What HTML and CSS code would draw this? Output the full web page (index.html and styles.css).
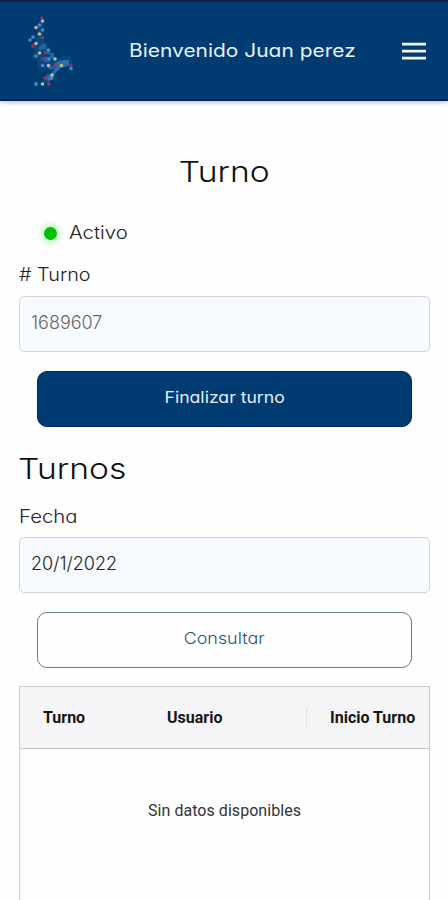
FILE: index.html
```html
<!DOCTYPE html>
<html lang="es">
<head>
<meta charset="utf-8">
<title>Turno</title>
<link rel="stylesheet" href="styles.css">
</head>
<body>
<header class="topbar">
  <svg class="logo" viewBox="0 0 60 80" width="60" height="80" aria-hidden="true">
    <g class="wing">
      <path d="M20 9l3-3 2 5-2 10 1 10 6 7 4 7 4 4 6-3 7 1 2 9-9-2-6 5-4 7-7 7-9 1 10-7 5-6-8-2-7-3-1-6-6-3 5-6-4-4 4-5 1-9z" opacity=".16"/>
      <path d="M35 53l4-2 5-1h5v6l-8 2-6 5-4 7-4 2 3-7 5-6z" opacity=".6"/>
      <g opacity=".45"><rect x="21" y="34" width="5" height="5"/><rect x="26" y="39" width="4" height="5"/><rect x="30" y="43" width="4" height="5"/><rect x="24" y="47" width="5" height="5"/><rect x="28" y="56" width="6" height="3"/><rect x="26" y="64" width="6" height="6"/><rect x="19" y="36" width="4" height="4"/></g>
    </g>
    <g class="blue"><circle cx="19.5" cy="15" r="1.8"/><circle cx="22.5" cy="20" r="1.8"/><circle cx="13" cy="27" r="1.8"/><circle cx="10" cy="30" r="1.8"/><circle cx="16" cy="46" r="1.8"/><circle cx="29" cy="49" r="1.8"/><circle cx="22.5" cy="55.5" r="1.8"/><circle cx="28.5" cy="40" r="1.8"/><circle cx="51" cy="58.5" r="1.8"/><circle cx="16" cy="74" r="1.9"/><circle cx="32" cy="68" r="1.8"/></g>
    <g class="gold"><circle cx="22.5" cy="11" r="1.8"/><circle cx="16" cy="17.5" r="1.8"/><circle cx="19.5" cy="24" r="1.8"/><circle cx="16" cy="33.5" r="1.8"/><circle cx="19.5" cy="43" r="1.8"/><circle cx="35" cy="49" r="1.8"/><circle cx="28.5" cy="55.5" r="1.8"/><circle cx="41.5" cy="55.5" r="1.8"/><circle cx="32" cy="65" r="1.8"/><circle cx="22.5" cy="74" r="1.8"/></g>
    <g class="red"><circle cx="22" cy="8" r="1.7"/><circle cx="22.5" cy="27.5" r="1.7"/><circle cx="13" cy="36" r="1.9"/><circle cx="25.5" cy="42.5" r="1.8"/><circle cx="22.5" cy="49" r="1.8"/><circle cx="35" cy="56" r="1.9"/><circle cx="51" cy="55.5" r="1.7"/><circle cx="25" cy="68" r="1.8"/><circle cx="29" cy="74" r="1.9"/></g>
  </svg>
  <span class="welcome">Bienvenido Juan perez</span>
  <svg class="menu" viewBox="0 0 24 18" width="24" height="18" aria-hidden="true"><path d="M0 2.2h24M0 9.2h24M0 16.2h24"/></svg>
</header>
<main>
  <h1>Turno</h1>
  <div class="status"><i class="dot"></i><span class="activo">Activo</span></div>
  <div class="label turno-label"># Turno</div>
  <div class="field muted">1689607</div>
  <div class="button primary"><span>Finalizar turno</span></div>
  <h2>Turnos</h2>
  <div class="label fecha-label">Fecha</div>
  <div class="field date">20/1/2022</div>
  <div class="button outline"><span>Consultar</span></div>
  <section class="grid">
    <div class="grid-head">
      <span class="c1">Turno</span><span class="c2">Usuario</span><span class="c3">Inicio Turno</span>
    </div>
    <div class="empty">Sin datos disponibles</div>
  </section>
</main>
</body>
</html>
```
FILE: styles.css
```css
* { box-sizing: border-box; }
body {
  margin: 0;
  height: 900px;
  overflow: hidden;
  background: #fefefe;
  color: #222;
  font-family: Inter, "Open Sans", sans-serif;
  font-feature-settings: "cv11" 1;
  font-weight: 300;
  white-space: nowrap;
}
.topbar {
  display: flex;
  align-items: flex-start;
  height: 101px;
  background: #003b71;
  border-top: 2px solid #14213d;
  border-bottom: 2px solid #00205f;
  box-shadow: 0 1px 5px rgba(0, 0, 0, .3);
  color: #e9f1fb;
}
.logo { margin: 8px 0 0 20px; }
.wing { fill: #3f8bd0; }
.blue { fill: #3f8dcb; }
.gold { fill: #bdb98c; }
.red { fill: #943068; }
.welcome {
  width: 233px;
  margin: 36px 40px 0 49px;
  font-size: 18px;
  line-height: 25px;
  font-weight: 400;
  transform: scaleX(1.163);
  transform-origin: left;
}
.menu { margin-top: 40px; stroke: #f2f6fc; stroke-width: 2.8; }
main { padding: 0 18px 0 19px; }
h1, h2 { width: fit-content; margin: 0; font-size: 29px; line-height: 36px; font-weight: 300; color: #111; transform: scaleX(1.16); }
h1 { margin: 53px auto 0; }
h2 { margin: 24px 0 0 -1px; transform-origin: left; }
.status { display: flex; align-items: center; height: 24px; margin: 30px 0 0 25px; }
.dot { width: 13px; height: 13px; margin-top: 2px; border-radius: 50%; background: #00bd00; box-shadow: 0 0 8px #58ef58; }
.activo { margin-left: 12px; font-size: 18px; transform: scaleX(1.13); transform-origin: left; }
.label { width: fit-content; font-size: 18px; line-height: 24px; transform: scaleX(1.13); transform-origin: left; }
.turno-label { margin-top: 19px; transform: scaleX(1.1); }
.fecha-label { margin-top: 18px; }
.field {
  height: 56px;
  padding-left: 11px;
  border: 1px solid #cfd3d7;
  border-radius: 5px;
  background: #f7fafe;
  font-size: 18px;
  line-height: 52px;
}
.turno-label + .field { margin-top: 9px; }
.fecha-label + .field { margin-top: 8px; }
.muted { color: #666; }
.button {
  height: 56px;
  margin: 19px 18px 0;
  border-radius: 10px;
  text-align: center;
  font-size: 16px;
  line-height: 50px;
}
.button span { display: inline-block; transform: scaleX(1.1); }
.primary { background: #003b71; border: 1px solid #00245f; color: #e5eef9; font-weight: 400; }
.outline { border: 1px solid #5d7f8b; color: #2c526f; }
.outline span { transform: scaleX(1.12); }
.grid { height: 230px; margin-top: 18px; border: 1px solid #cacbce; font-family: Roboto, sans-serif; }
.grid-head {
  display: grid;
  grid-template-columns: 124px 162px 1fr;
  align-items: center;
  height: 62px;
  background: #f5f5f7;
  border-bottom: 1px solid #c5c6c9;
  color: #151515;
  font-size: 16px;
  font-weight: 700;
}
.c1, .c2, .c3 { padding-left: 23px; line-height: 22px; }
.c3 { border-left: 1px solid #e2e2e5; }
.empty { margin-top: 51px; text-align: center; font-size: 16px; line-height: 22px; font-weight: 400; letter-spacing: .05px; color: #333; }
```
